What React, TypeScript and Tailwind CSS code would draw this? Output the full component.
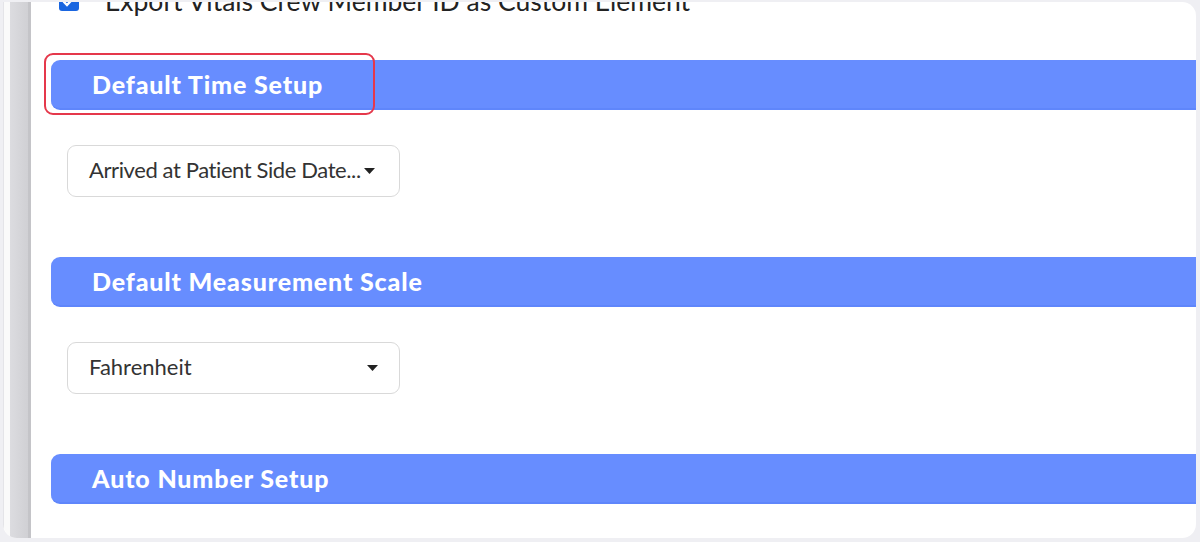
const font = { fontFamily: 'Lato, "Open Sans", sans-serif' };

function SectionHeader({ title, highlight }: { title: string; highlight?: boolean }) {
  return (
    <div className="relative">
      {highlight && (
        <div className="pointer-events-none absolute left-[-7px] top-[-7px] h-[62px] w-[331px] rounded-[9px] border-2 border-[#e5384b]" />
      )}
      <div className="flex h-[50px] items-center rounded-l-[9px] border-b-2 border-[#5f86fb] bg-[#678dff] pl-[41px]">
        <span className="text-[25px] font-black leading-none tracking-[0.85px] text-white">{title}</span>
      </div>
    </div>
  );
}

function Dropdown({ value, tight }: { value: string; tight?: boolean }) {
  return (
    <div className="ml-[16px] flex h-[52px] w-[333px] items-center rounded-[9px] border border-[#d9d9d9] bg-white pb-[3px] pl-[21px] pr-[21px]">
      <span
        className={
          tight
            ? 'whitespace-nowrap text-[22px] tracking-[-0.4px] text-[#333]'
            : 'flex-1 whitespace-nowrap text-[22px] text-[#333]'
        }
      >
        {value}
      </span>
      <svg width="11" height="6" viewBox="0 0 11 6" className={tight ? 'ml-[3px] mt-[3px] shrink-0' : 'mt-[3px] shrink-0'}>
        <path d="M0 0h11L5.5 6z" fill="#222" />
      </svg>
    </div>
  );
}

export default function App() {
  return (
    <div style={font} className="h-[542px] w-[1200px] overflow-hidden bg-[#efeff3] pb-[4px] pl-[3px] pr-[4px] pt-[2px]">
      <div className="flex h-full overflow-hidden rounded-b-[14px] rounded-tr-[14px] bg-white">
        <div className="w-[7px] shrink-0 border-l border-[#e4e4e8] bg-[#fafafa]" />
        <div className="w-[18px] shrink-0 bg-gradient-to-r from-[#dcdce0] to-[#d0d0d4]" />
        <div className="w-[3px] shrink-0 bg-[#c4c4c8]" />
        <div className="min-w-0 flex-1 pl-[20px]">
          <div className="mt-[-14px] flex h-[26px] items-center">
            <span className="ml-[8px] flex h-[20px] w-[20px] items-center justify-center rounded-[3px] bg-[#1a66e0]">
              <svg width="14" height="12" viewBox="0 0 14 12">
                <path d="M1.5 6.5l3.5 3.5 7.5-8" stroke="#fff" strokeWidth="2.4" fill="none" />
              </svg>
            </span>
            <span className="ml-[26px] whitespace-nowrap text-[26.5px] leading-none text-[#222]">
              Export Vitals Crew Member ID as Custom Element
            </span>
          </div>

          <div className="mt-[46px]">
            <SectionHeader title="Default Time Setup" highlight />
          </div>
          <div className="mt-[35px]">
            <Dropdown value="Arrived at Patient Side Date..." tight />
          </div>

          <div className="mt-[60px]">
            <SectionHeader title="Default Measurement Scale" />
          </div>
          <div className="mt-[35px]">
            <Dropdown value="Fahrenheit" />
          </div>

          <div className="mt-[60px]">
            <SectionHeader title="Auto Number Setup" />
          </div>
        </div>
      </div>
    </div>
  );
}
